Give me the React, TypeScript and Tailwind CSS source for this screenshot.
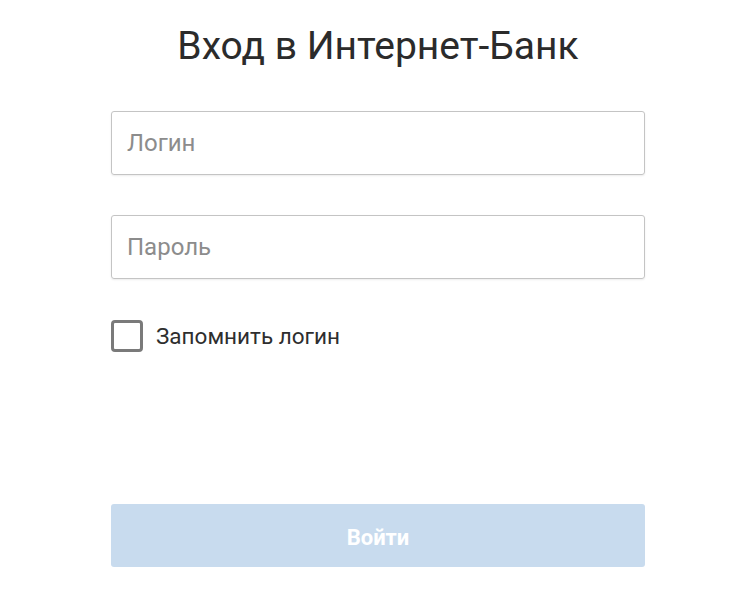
import React from "react";

export default function App() {
  return (
    <div className="w-[736px] h-[614px] bg-white" style={{ fontFamily: "Roboto, 'Noto Sans', sans-serif" }}>
      <div className="ml-[111px] w-[534px] flex flex-col pt-[24px]">
        <h1 className="text-center text-[39px] leading-[44px] text-[#2b2b2b] font-normal">Вход в Интернет-Банк</h1>
        <div className="mt-[43px] h-[64px] border border-[#c4c4c4] rounded-[3px] flex items-center px-[15px] shadow-[0_1px_2px_rgba(0,0,0,0.08)]">
          <span className="text-[24px] text-[#8c8c8c]">Логин</span>
        </div>
        <div className="mt-[40px] h-[64px] border border-[#c4c4c4] rounded-[3px] flex items-center px-[15px] shadow-[0_1px_2px_rgba(0,0,0,0.08)]">
          <span className="text-[24px] text-[#8c8c8c]">Пароль</span>
        </div>
        <div className="mt-[41px] h-[32px] flex items-center gap-[13px]">
          <div className="w-[32px] h-[32px] border-[3px] border-[#7a7a7a] rounded-[4px]" />
          <span className="text-[22.5px] leading-[32px] text-[#2e2e2e]">Запомнить логин</span>
        </div>
        <div className="mt-[152px] h-[63px] pt-[4px] rounded-[3px] bg-[#c8dbee] flex items-center justify-center">
          <span className="text-[22px] font-bold text-white">Войти</span>
        </div>
      </div>
    </div>
  );
}
